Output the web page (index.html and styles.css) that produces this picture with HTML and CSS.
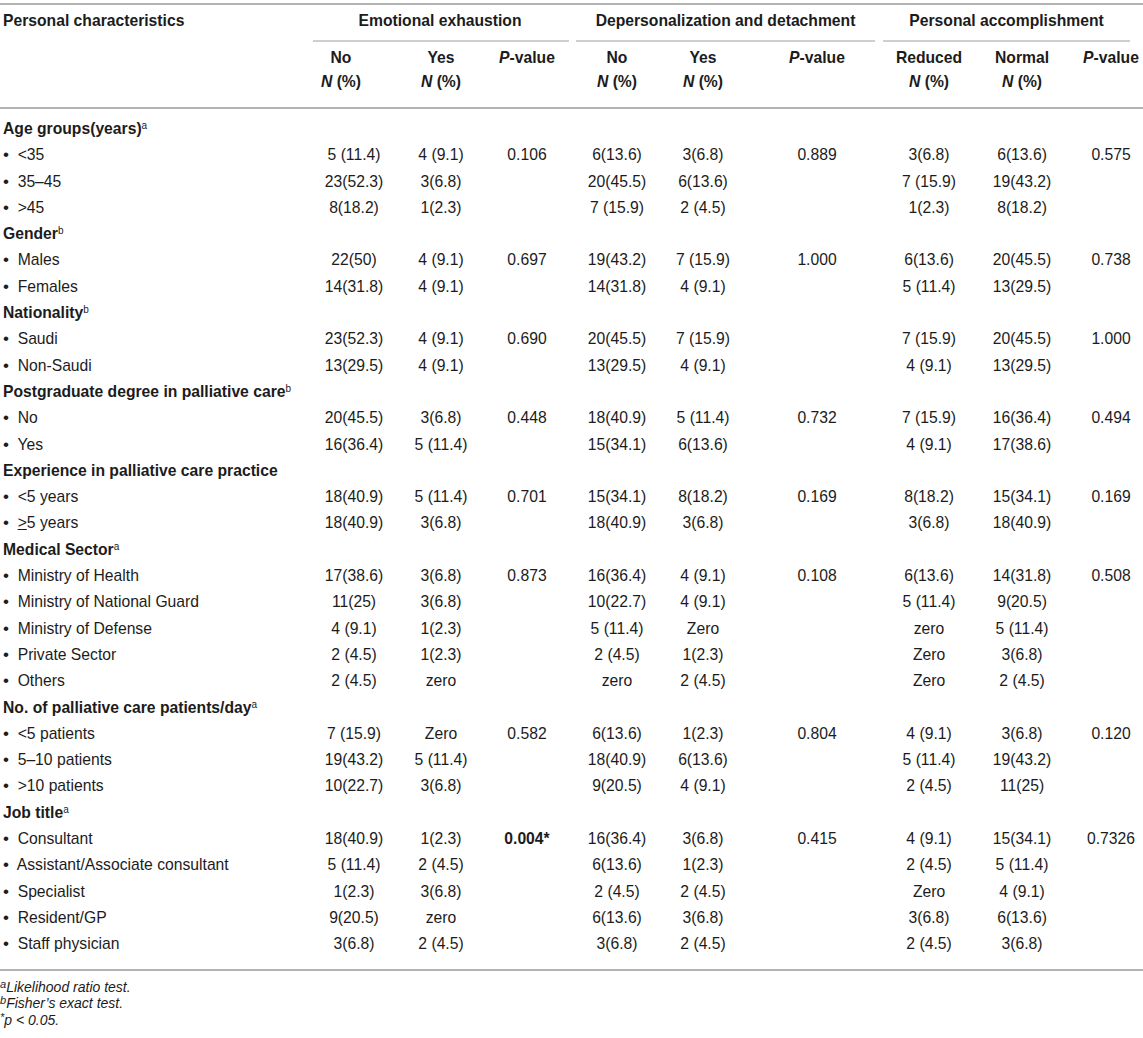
FILE: index.html
```html
<!DOCTYPE html>
<html>
<head>
<meta charset="utf-8">
<link rel="stylesheet" href="styles.css">
</head>
<body>
<div class="page">
<table class="tbl">
<colgroup>
<col class="w-c1"><col class="w-no1"><col class="w-yes1"><col class="w-p1"><col class="w-no2"><col class="w-yes2"><col class="w-p2"><col class="w-red"><col class="w-nor"><col class="w-p3">
</colgroup>
<thead>
<tr class="hr1">
<th class="lab">Personal characteristics</th>
<th colspan="3" class="grp g1"><div class="grp-in">Emotional exhaustion</div></th>
<th colspan="3" class="grp g2"><div class="grp-in">Depersonalization and detachment</div></th>
<th colspan="3" class="grp g3"><div class="grp-in">Personal accomplishment</div></th>
</tr>
<tr class="hr2">
<th></th>
<th class="sub">No<br><i>N</i> (%)</th>
<th class="sub">Yes<br><i>N</i> (%)</th>
<th class="sub"><i>P</i>-value<br>&nbsp;</th>
<th class="sub">No<br><i>N</i> (%)</th>
<th class="sub">Yes<br><i>N</i> (%)</th>
<th class="sub"><i>P</i>-value<br>&nbsp;</th>
<th class="sub">Reduced<br><i>N</i> (%)</th>
<th class="sub">Normal<br><i>N</i> (%)</th>
<th class="sub"><i>P</i>-value<br>&nbsp;</th>
</tr>
</thead>
<tbody>
<tr class="sec first"><td colspan="10">Age groups(years)<sup>a</sup></td></tr>
<tr><td><span class="bul">•</span>&nbsp; &lt;35</td><td>5 (11.4)</td><td>4 (9.1)</td><td>0.106</td><td>6(13.6)</td><td>3(6.8)</td><td>0.889</td><td>3(6.8)</td><td>6(13.6)</td><td>0.575</td></tr>
<tr><td><span class="bul">•</span>&nbsp; 35–45</td><td>23(52.3)</td><td>3(6.8)</td><td></td><td>20(45.5)</td><td>6(13.6)</td><td></td><td>7 (15.9)</td><td>19(43.2)</td><td></td></tr>
<tr><td><span class="bul">•</span>&nbsp; &gt;45</td><td>8(18.2)</td><td>1(2.3)</td><td></td><td>7 (15.9)</td><td>2 (4.5)</td><td></td><td>1(2.3)</td><td>8(18.2)</td><td></td></tr>
<tr class="sec"><td colspan="10">Gender<sup>b</sup></td></tr>
<tr><td><span class="bul">•</span>&nbsp; Males</td><td>22(50)</td><td>4 (9.1)</td><td>0.697</td><td>19(43.2)</td><td>7 (15.9)</td><td>1.000</td><td>6(13.6)</td><td>20(45.5)</td><td>0.738</td></tr>
<tr><td><span class="bul">•</span>&nbsp; Females</td><td>14(31.8)</td><td>4 (9.1)</td><td></td><td>14(31.8)</td><td>4 (9.1)</td><td></td><td>5 (11.4)</td><td>13(29.5)</td><td></td></tr>
<tr class="sec"><td colspan="10">Nationality<sup>b</sup></td></tr>
<tr><td><span class="bul">•</span>&nbsp; Saudi</td><td>23(52.3)</td><td>4 (9.1)</td><td>0.690</td><td>20(45.5)</td><td>7 (15.9)</td><td></td><td>7 (15.9)</td><td>20(45.5)</td><td>1.000</td></tr>
<tr><td><span class="bul">•</span>&nbsp; Non-Saudi</td><td>13(29.5)</td><td>4 (9.1)</td><td></td><td>13(29.5)</td><td>4 (9.1)</td><td></td><td>4 (9.1)</td><td>13(29.5)</td><td></td></tr>
<tr class="sec"><td colspan="10">Postgraduate degree in palliative care<sup>b</sup></td></tr>
<tr><td><span class="bul">•</span>&nbsp; No</td><td>20(45.5)</td><td>3(6.8)</td><td>0.448</td><td>18(40.9)</td><td>5 (11.4)</td><td>0.732</td><td>7 (15.9)</td><td>16(36.4)</td><td>0.494</td></tr>
<tr><td><span class="bul">•</span>&nbsp; Yes</td><td>16(36.4)</td><td>5 (11.4)</td><td></td><td>15(34.1)</td><td>6(13.6)</td><td></td><td>4 (9.1)</td><td>17(38.6)</td><td></td></tr>
<tr class="sec"><td colspan="10">Experience in palliative care practice</td></tr>
<tr><td><span class="bul">•</span>&nbsp; &lt;5 years</td><td>18(40.9)</td><td>5 (11.4)</td><td>0.701</td><td>15(34.1)</td><td>8(18.2)</td><td>0.169</td><td>8(18.2)</td><td>15(34.1)</td><td>0.169</td></tr>
<tr><td><span class="bul">•</span>&nbsp; <u>&gt;</u>5 years</td><td>18(40.9)</td><td>3(6.8)</td><td></td><td>18(40.9)</td><td>3(6.8)</td><td></td><td>3(6.8)</td><td>18(40.9)</td><td></td></tr>
<tr class="sec"><td colspan="10">Medical Sector<sup>a</sup></td></tr>
<tr><td><span class="bul">•</span>&nbsp; Ministry of Health</td><td>17(38.6)</td><td>3(6.8)</td><td>0.873</td><td>16(36.4)</td><td>4 (9.1)</td><td>0.108</td><td>6(13.6)</td><td>14(31.8)</td><td>0.508</td></tr>
<tr><td><span class="bul">•</span>&nbsp; Ministry of National Guard</td><td>11(25)</td><td>3(6.8)</td><td></td><td>10(22.7)</td><td>4 (9.1)</td><td></td><td>5 (11.4)</td><td>9(20.5)</td><td></td></tr>
<tr><td><span class="bul">•</span>&nbsp; Ministry of Defense</td><td>4 (9.1)</td><td>1(2.3)</td><td></td><td>5 (11.4)</td><td>Zero</td><td></td><td>zero</td><td>5 (11.4)</td><td></td></tr>
<tr><td><span class="bul">•</span>&nbsp; Private Sector</td><td>2 (4.5)</td><td>1(2.3)</td><td></td><td>2 (4.5)</td><td>1(2.3)</td><td></td><td>Zero</td><td>3(6.8)</td><td></td></tr>
<tr><td><span class="bul">•</span>&nbsp; Others</td><td>2 (4.5)</td><td>zero</td><td></td><td>zero</td><td>2 (4.5)</td><td></td><td>Zero</td><td>2 (4.5)</td><td></td></tr>
<tr class="sec"><td colspan="10">No. of palliative care patients/day<sup>a</sup></td></tr>
<tr><td><span class="bul">•</span>&nbsp; &lt;5 patients</td><td>7 (15.9)</td><td>Zero</td><td>0.582</td><td>6(13.6)</td><td>1(2.3)</td><td>0.804</td><td>4 (9.1)</td><td>3(6.8)</td><td>0.120</td></tr>
<tr><td><span class="bul">•</span>&nbsp; 5–10 patients</td><td>19(43.2)</td><td>5 (11.4)</td><td></td><td>18(40.9)</td><td>6(13.6)</td><td></td><td>5 (11.4)</td><td>19(43.2)</td><td></td></tr>
<tr><td><span class="bul">•</span>&nbsp; &gt;10 patients</td><td>10(22.7)</td><td>3(6.8)</td><td></td><td>9(20.5)</td><td>4 (9.1)</td><td></td><td>2 (4.5)</td><td>11(25)</td><td></td></tr>
<tr class="sec"><td colspan="10">Job title<sup>a</sup></td></tr>
<tr><td><span class="bul">•</span>&nbsp; Consultant</td><td>18(40.9)</td><td>1(2.3)</td><td><b>0.004*</b></td><td>16(36.4)</td><td>3(6.8)</td><td>0.415</td><td>4 (9.1)</td><td>15(34.1)</td><td>0.7326</td></tr>
<tr><td><span class="bul">•</span>&nbsp; Assistant/Associate consultant</td><td>5 (11.4)</td><td>2 (4.5)</td><td></td><td>6(13.6)</td><td>1(2.3)</td><td></td><td>2 (4.5)</td><td>5 (11.4)</td><td></td></tr>
<tr><td><span class="bul">•</span>&nbsp; Specialist</td><td>1(2.3)</td><td>3(6.8)</td><td></td><td>2 (4.5)</td><td>2 (4.5)</td><td></td><td>Zero</td><td>4 (9.1)</td><td></td></tr>
<tr><td><span class="bul">•</span>&nbsp; Resident/GP</td><td>9(20.5)</td><td>zero</td><td></td><td>6(13.6)</td><td>3(6.8)</td><td></td><td>3(6.8)</td><td>6(13.6)</td><td></td></tr>
<tr class="last"><td><span class="bul">•</span>&nbsp; Staff physician</td><td>3(6.8)</td><td>2 (4.5)</td><td></td><td>3(6.8)</td><td>2 (4.5)</td><td></td><td>2 (4.5)</td><td>3(6.8)</td><td></td></tr>
</tbody>
</table>
<div class="notes">
<p><sup>a</sup>Likelihood ratio test.</p>
<p><sup>b</sup>Fisher’s exact test.</p>
<p><sup>*</sup>p &lt; 0.05.</p>
</div>
</div>
</body>
</html>
```

FILE: styles.css
```css
html, body {
  margin: 0;
  padding: 0;
  background: #ffffff;
}

.page {
  padding-top: 3px;
  font-family: "Liberation Sans", Arial, Helvetica, sans-serif;
  color: #1c1c1c;
  width: 1143px;
}

.tbl {
  width: 1143px;
  border-collapse: collapse;
  table-layout: fixed;
  font-size: 15.7px;
  border-top: 2px solid #b3b3b3;
  border-bottom: 2px solid #b3b3b3;
}

.w-c1 { width: 313px; }
.w-no1 { width: 82px; }
.w-yes1 { width: 92px; }
.w-p1 { width: 85px; }
.w-no2 { width: 90px; }
.w-yes2 { width: 82px; }
.w-p2 { width: 135px; }
.w-red { width: 100px; }
.w-nor { width: 86px; }
.w-p3 { width: 78px; }

.tbl th {
  font-weight: bold;
  padding: 0;
  text-align: center;
  vertical-align: top;
}

.hr1 th {
  padding-top: 6px;
  line-height: 20px;
}

.tbl th.lab {
  text-align: left;
  padding: 6px 0 0 3px;
}

.grp-in {
  border-bottom: 2px solid #cfcfcf;
  padding-bottom: 9px;
}

.g1 .grp-in { margin-right: 3px; padding-right: 2px; }
.g2 .grp-in { margin: 0 4px; }
.g3 .grp-in { margin: 0 13px 0 4px; }

.hr2 th {
  line-height: 24px;
  padding-top: 4px;
  padding-bottom: 13px;
  border-bottom: 2px solid #b3b3b3;
}

.hr2 th:nth-child(2) { padding-right: 26px; }
.hr2 th:nth-child(4) { padding-right: 5px; }
.hr2 th:nth-child(7) { padding-left: 11px; }
.hr2 th:nth-child(10) { padding-left: 14px; }

.tbl td {
  padding: 3px 0;
  line-height: 20.3px;
  text-align: center;
  white-space: nowrap;
}

.tbl td:first-child {
  text-align: left;
  padding-left: 3px;
}

.bul {
  font-size: 17px;
}

.tbl td:nth-child(4) { padding-right: 5px; }
.tbl td:nth-child(7) { padding-left: 11px; }
.tbl td:nth-child(10) { padding-left: 14px; }

.sec td {
  font-weight: bold;
}

.first td { padding-top: 10px; }
.last td { padding-bottom: 14px; }

sup {
  font-size: 10px;
  font-weight: normal;
  line-height: 0;
  vertical-align: 5px;
}

u {
  text-decoration: underline;
}

.notes {
  margin-top: 8px;
  font-size: 14px;
  font-style: italic;
}

.notes p {
  margin: 0;
  line-height: 16.5px;
}

.notes sup {
  font-size: 11px;
  vertical-align: 4px;
}
```
